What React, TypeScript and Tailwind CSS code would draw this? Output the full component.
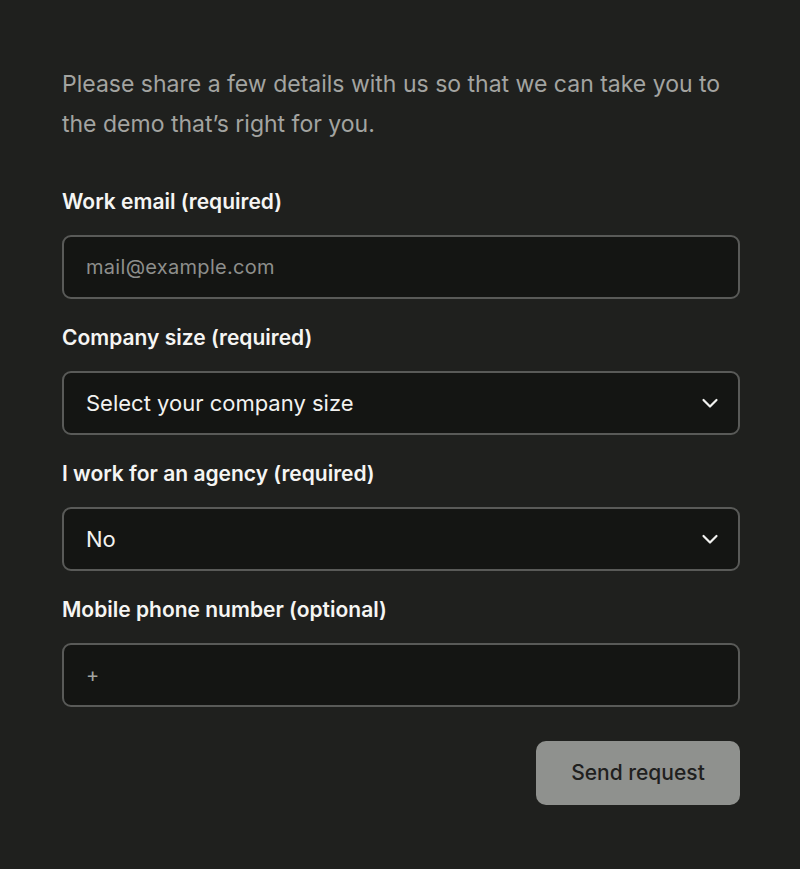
import React from "react";

const font = { fontFamily: "Inter, 'Noto Sans', sans-serif" };

function Chevron() {
  return (
    <svg width="20" height="20" viewBox="0 0 20 20" fill="none" className="shrink-0">
      <path d="M3.5 7 L10 13.5 L16.5 7" stroke="#f2f2f0" strokeWidth="2.2" strokeLinecap="round" strokeLinejoin="round" />
    </svg>
  );
}

function Label({ children }: { children: React.ReactNode }) {
  return <div className="text-[21px] leading-[28px] font-semibold text-[#f5f5f3]">{children}</div>;
}

export default function App() {
  return (
    <div className="min-h-[869px] w-[800px] bg-[#1f201e]" style={font}>
      <div className="pl-[62px] pr-[60px] pt-[64px] pb-[64px]">
        <p className="text-[23px] leading-[40px] text-[#a3a4a1]">
          Please share a few details with us so that we can take you to the demo that’s right for you.
        </p>
        <div className="mt-[44px] flex flex-col">
          <Label>Work email (required)</Label>
          <div className="mt-[19px] h-[64px] rounded-[9px] border-2 border-[#595a58] bg-[#141513] flex items-center px-[22px]">
            <span className="text-[20px] tracking-[0.3px] text-[#8e8f8c]">mail@example.com</span>
          </div>
          <div className="mt-[25px]"><Label>Company size (required)</Label></div>
          <div className="mt-[19px] h-[64px] rounded-[9px] border-2 border-[#595a58] bg-[#141513] flex items-center justify-between pl-[22px] pr-[18px]">
            <span className="text-[22px] text-[#f2f2f0]">Select your company size</span>
            <Chevron />
          </div>
          <div className="mt-[25px]"><Label>I work for an agency (required)</Label></div>
          <div className="mt-[19px] h-[64px] rounded-[9px] border-2 border-[#595a58] bg-[#141513] flex items-center justify-between pl-[22px] pr-[18px]">
            <span className="text-[22px] text-[#f2f2f0]">No</span>
            <Chevron />
          </div>
          <div className="mt-[25px]"><Label>Mobile phone number (optional)</Label></div>
          <div className="mt-[19px] h-[64px] rounded-[9px] border-2 border-[#595a58] bg-[#141513] flex items-center px-[22px]">
            <span className="text-[20px] text-[#a3a4a1]">+</span>
          </div>
          <div className="mt-[34px] flex justify-end">
            <button className="h-[64px] w-[204px] rounded-[10px] bg-[#8f918e] text-[21px] font-medium text-[#1f201e]">
              Send request
            </button>
          </div>
        </div>
      </div>
    </div>
  );
}
